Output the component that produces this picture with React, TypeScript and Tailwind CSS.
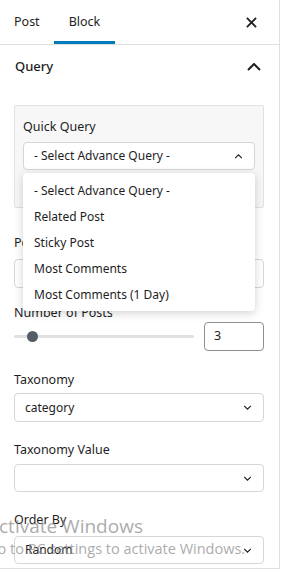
import React from 'react';

const Chevron = ({ up, className }: { up?: boolean; className?: string }) => (
  <svg viewBox="0 0 10 6" className={className} fill="none" stroke="currentColor" strokeWidth="1.4">
    {up ? <path d="M1 5 L5 1 L9 5" /> : <path d="M1 1 L5 5 L9 1" />}
  </svg>
);

const Field: React.FC<{ label: string; gap: string; top: string; children: React.ReactNode }> = ({ label, gap, top, children }) => (
  <div className={top}>
    <div className={`text-[12.5px] leading-[18px] text-[#1e1e1e] ${gap}`}>{label}</div>
    {children}
  </div>
);

const Select: React.FC<{ value?: string; h?: string }> = ({ value, h = 'h-[29px]' }) => (
  <div className={`flex items-center justify-between ${h} rounded-[4px] border border-[#d6d6d6] bg-white pl-[10px] pr-[11px]`}>
    <span className="text-[12px] text-[#1e1e1e]">{value}</span>
    <Chevron className="w-[9px] h-[5px] text-[#1e1e1e]" />
  </div>
);

const options = ['- Select Advance Query -', 'Related Post', 'Sticky Post', 'Most Comments', 'Most Comments (1 Day)'];

export default function App() {
  return (
    <div className="relative h-[573px] w-[281px] overflow-hidden bg-white" style={{ fontFamily: '"Noto Sans", "Open Sans", sans-serif' }}>
      <div className="h-[569px] w-[280px] border-r border-b border-[#e0e0e0]">
        {/* tabs */}
        <div className="flex h-[45px] items-stretch border-b border-[#e0e0e0]">
          <div className="flex items-center px-[14px] text-[12.5px] text-[#1e1e1e]">Post</div>
          <div className="flex items-center border-b-[3px] border-[#007cba] px-[15px] pt-[3px] text-[12.5px] text-[#1e1e1e]">Block</div>
          <div className="ml-auto flex items-center pr-[22px]">
            <svg viewBox="0 0 12 12" className="h-[11px] w-[11px]" stroke="#1e1e1e" strokeWidth="2">
              <path d="M1 1 L11 11 M11 1 L1 11" />
            </svg>
          </div>
        </div>

        {/* query header */}
        <div className="flex h-[44px] items-center justify-between pl-[15px] pr-[18px]">
          <span className="text-[13px] font-medium text-[#1e1e1e]">Query</span>
          <svg viewBox="0 0 14 8" className="h-[8px] w-[14px]" fill="none" stroke="#1e1e1e" strokeWidth="2">
            <path d="M1 7 L7 1 L13 7" />
          </svg>
        </div>

        <div className="pl-[14px] pr-[15px] pt-[16px]">
          {/* quick query box */}
          <div className="relative rounded-[2px] border border-[#e2e2e2] bg-[#f7f7f7] px-[8px] pb-[37px] pt-[12px]">
            <div className="mb-[6px] text-[12.5px] leading-[18px] text-[#1e1e1e]">Quick Query</div>
            <div className="flex h-[28px] items-center justify-between rounded-[4px] border border-[#d6d6d6] bg-white pl-[10px] pr-[11px]">
              <span className="text-[12px] text-[#1e1e1e]">- Select Advance Query -</span>
              <Chevron up className="w-[9px] h-[5px] text-[#1e1e1e]" />
            </div>
            <div className="absolute left-[8px] right-[8px] top-[67px] z-10 rounded-[4px] bg-white pb-[3px] pt-[5px] shadow-[0_2px_10px_rgba(0,0,0,0.18)]">
              {options.map((o) => (
                <div key={o} className="flex h-[26px] items-center pl-[11px] text-[12px] text-[#1e1e1e]">
                  {o}
                </div>
              ))}
            </div>
          </div>

          <Field label="Post Type" gap="mb-[7px]" top="mt-[26px]">
            <Select />
          </Field>

          <Field label="Number of Posts" gap="mb-0" top="mt-[16px]">
            <div className="flex items-center gap-[10px]">
              <div className="relative h-[3px] flex-1 rounded-full bg-[#e0e0e0]">
                <div className="absolute left-[13px] top-[-4px] h-[11px] w-[11px] rounded-full bg-[#555d66]" />
              </div>
              <div className="flex h-[29px] w-[60px] items-center rounded-[4px] border border-[#8c8f94] pl-[9px] text-[12.5px] text-[#1e1e1e]">3</div>
            </div>
          </Field>

          <Field label="Taxonomy" gap="mb-[4px]" top="mt-[20px]">
            <Select value="category" />
          </Field>

          <Field label="Taxonomy Value" gap="mb-[5px]" top="mt-[19px]">
            <Select h="h-[28px]" />
          </Field>

          <Field label="Order By" gap="mb-[7px]" top="mt-[19px]">
            <Select value="Random" h="h-[28px]" />
          </Field>
        </div>
      </div>

      {/* windows activation watermark */}
      <div className="pointer-events-none absolute left-[-13px] top-[514px] text-[#8a8a8a] opacity-70" style={{ fontFamily: '"Open Sans", "Noto Sans", sans-serif' }}>
        <div className="text-[19px] leading-[25px]">Activate Windows</div>
        <div className="text-[14.5px] leading-[19px]">Go to PC settings to activate Windows.</div>
      </div>
    </div>
  );
}
